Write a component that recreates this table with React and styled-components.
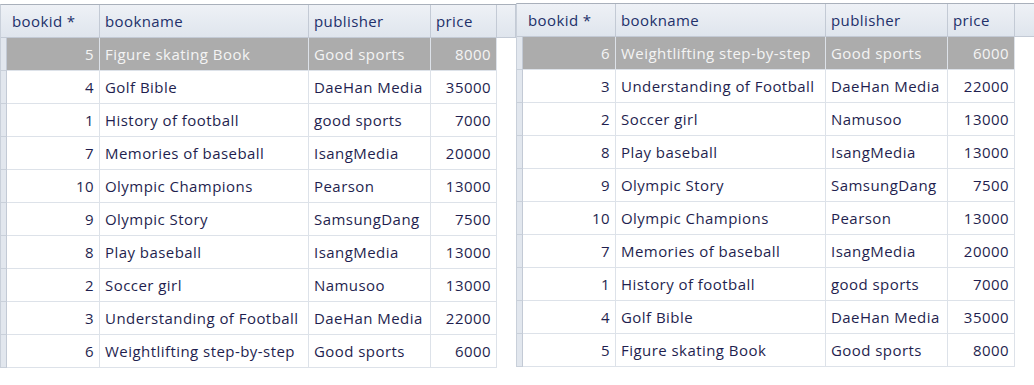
import React from "react";
import styled, { createGlobalStyle } from "styled-components";

const GlobalStyle = createGlobalStyle`
  html, body {
    margin: 0;
    padding: 0;
    background: #ffffff;
  }
  body {
    font-family: "Open Sans", "Noto Sans", sans-serif;
  }
`;

const Page = styled.div`
  display: flex;
  width: 1034px;
  height: 385px;
  overflow: hidden;
  background: #ffffff;
`;

const Panel = styled.div`
  width: ${(p) => p.width}px;
  padding-top: ${(p) => p.top}px;
  flex: none;
`;

const Grid = styled.div`
  border-top: 1px solid #a9b0bb;
  border-left: 1px solid #c9d0da;
`;

const Row = styled.div`
  display: grid;
  grid-template-columns: ${(p) => p.cols};
  height: 33px;
`;

const HeadCell = styled.div`
  display: flex;
  align-items: center;
  padding: 0 5px;
  font-size: 15px;
  letter-spacing: 0.4px;
  color: #22306a;
  background: linear-gradient(#eef1f6, #dfe5ed);
  border-right: 1px solid #c3cad5;
  border-bottom: 1px solid #c3cad5;
  box-sizing: border-box;
  white-space: nowrap;
  overflow: hidden;
`;

const RowHead = styled.div`
  background: #e2e7ee;
  border-right: 1px solid #c3cad5;
  border-bottom: 1px solid #c9d0da;
  box-sizing: border-box;
`;

const Cell = styled.div`
  display: flex;
  align-items: center;
  justify-content: ${(p) => (p.num ? "flex-end" : "flex-start")};
  padding: 0 5px 0 5px;
  font-size: 15px;
  letter-spacing: 0.45px;
  color: ${(p) => (p.sel ? "#f4f4f4" : "#1f1f4f")};
  background: ${(p) => (p.sel ? "#acacac" : "#ffffff")};
  border-right: 1px solid #dde2e9;
  border-bottom: 1px solid #dde2e9;
  box-sizing: border-box;
  white-space: nowrap;
  overflow: hidden;
`;

const Blank = styled.div`
  background: #ffffff;
`;

const books = {
  1: ["History of football", "good sports", 7000],
  2: ["Soccer girl", "Namusoo", 13000],
  3: ["Understanding of Football", "DaeHan Media", 22000],
  4: ["Golf Bible", "DaeHan Media", 35000],
  5: ["Figure skating Book", "Good sports", 8000],
  6: ["Weightlifting step-by-step", "Good sports", 6000],
  7: ["Memories of baseball", "IsangMedia", 20000],
  8: ["Play baseball", "IsangMedia", 13000],
  9: ["Olympic Story", "SamsungDang", 7500],
  10: ["Olympic Champions", "Pearson", 13000],
};

const leftOrder = [5, 4, 1, 7, 10, 9, 8, 2, 3, 6];
const rightOrder = [6, 3, 2, 8, 9, 10, 7, 1, 4, 5];

const BookGrid = ({ order, cols }) => (
  <Grid>
    <Row cols={cols}>
      <HeadCell />
      <HeadCell>bookid *</HeadCell>
      <HeadCell>bookname</HeadCell>
      <HeadCell>publisher</HeadCell>
      <HeadCell>price</HeadCell>
      <HeadCell />
    </Row>
    {order.map((id, i) => {
      const [name, pub, price] = books[id];
      const sel = i === 0;
      return (
        <Row cols={cols} key={id}>
          <RowHead />
          <Cell num sel={sel}>{id}</Cell>
          <Cell sel={sel}>{name}</Cell>
          <Cell sel={sel}>{pub}</Cell>
          <Cell num sel={sel}>{price}</Cell>
          <Blank />
        </Row>
      );
    })}
  </Grid>
);

export default function App() {
  return (
    <>
      <GlobalStyle />
      <Page>
        <Panel width={516} top={4}>
          <BookGrid order={leftOrder} cols="6px 93px 209px 122px 66px 19px" />
        </Panel>
        <Panel width={518} top={3}>
          <BookGrid order={rightOrder} cols="6px 93px 210px 122px 67px 20px" />
        </Panel>
      </Page>
    </>
  );
}
